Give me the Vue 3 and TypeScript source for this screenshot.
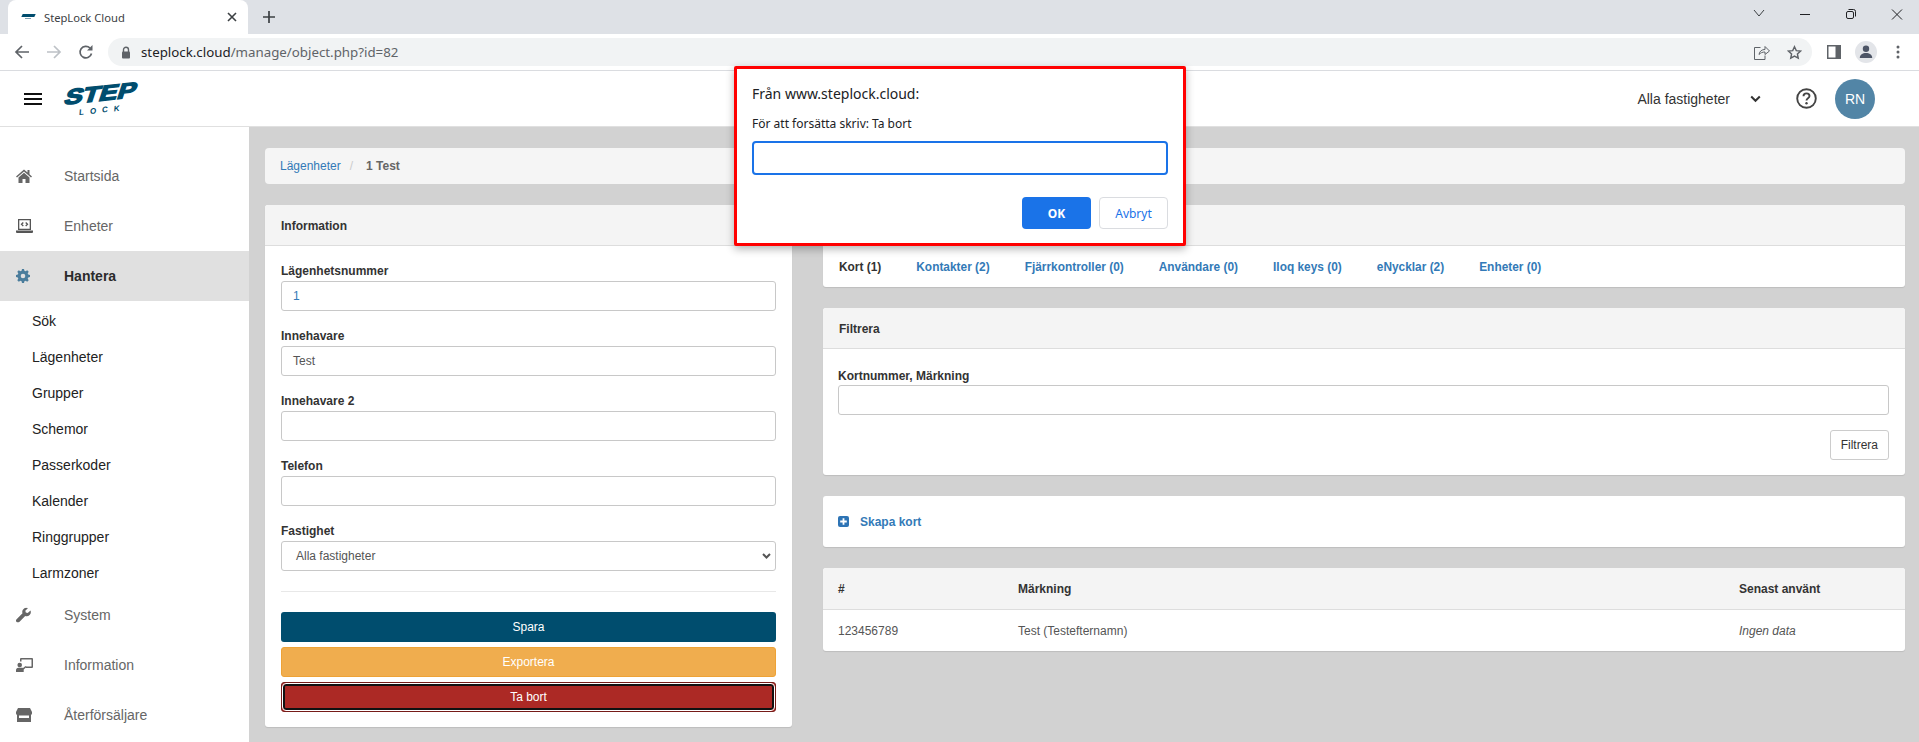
<script setup lang="ts">
const subItems = ['Sök', 'Lägenheter', 'Grupper', 'Schemor', 'Passerkoder', 'Kalender', 'Ringgrupper', 'Larmzoner']
const tabs = [
  { label: 'Kort (1)', active: true },
  { label: 'Kontakter (2)', active: false },
  { label: 'Fjärrkontroller (0)', active: false },
  { label: 'Användare (0)', active: false },
  { label: 'Iloq keys (0)', active: false },
  { label: 'eNycklar (2)', active: false },
  { label: 'Enheter (0)', active: false },
]
const fields = [
  { label: 'Lägenhetsnummer', value: '1' },
  { label: 'Innehavare', value: 'Test' },
  { label: 'Innehavare 2', value: '' },
  { label: 'Telefon', value: '' },
]
</script>

<template>
  <div class="window">
    <div class="tabstrip">
      <div class="tab">
        <span class="fav">
          <span class="fav-a"></span>
          <span class="fav-b"></span>
        </span>
        <span class="tab-title">StepLock Cloud</span>
        <svg class="tab-x" width="10" height="10" viewBox="0 0 10 10"><path d="M1 1l8 8M9 1l-8 8" stroke="#3c4043" stroke-width="1.6" /></svg>
      </div>
      <svg class="plus" width="14" height="14" viewBox="0 0 14 14"><path d="M7 1v12M1 7h12" stroke="#3c4043" stroke-width="1.7" /></svg>
      <div class="win-ctrls">
        <svg width="46" height="28" viewBox="0 0 46 28"><path d="M18 10l5 6 5-6" fill="none" stroke="#3c4043" /></svg>
        <svg width="46" height="28" viewBox="0 0 46 28"><path d="M18 14.500h10" stroke="#202124" /></svg>
        <svg width="46" height="28" viewBox="0 0 46 28"><rect x="18.500" y="11.500" width="7" height="7" rx="1.500" fill="none" stroke="#202124" /><path d="M20.500 9.500h5a2 2 0 0 1 2 2v5" fill="none" stroke="#202124" /></svg>
        <svg width="46" height="28" viewBox="0 0 46 28"><path d="M18 9.500l10 10M28 9.500l-10 10" stroke="#202124" /></svg>
      </div>
    </div>

    <div class="toolbar">
      <svg class="nav-ic" width="16" height="16" viewBox="0 0 16 16"><path d="M15 8H2M8 2L2 8l6 6" fill="none" stroke="#5f6368" stroke-width="1.700" /></svg>
      <svg class="nav-ic" width="16" height="16" viewBox="0 0 16 16"><path d="M1 8h13M8 2l6 6-6 6" fill="none" stroke="#bdc1c6" stroke-width="1.700" /></svg>
      <svg class="nav-ic" width="16" height="16" viewBox="0 0 16 16"><path d="M13.500 9.500A5.800 5.800 0 1 1 12 4" fill="none" stroke="#5f6368" stroke-width="1.700" /><path d="M14.500 1v5.500H9z" fill="#5f6368" /></svg>
      <div class="omnibox">
        <svg width="10" height="13" viewBox="0 0 10 13"><path d="M2.500 6V3.800a2.500 2.500 0 0 1 5 0V6" fill="none" stroke="#5f6368" stroke-width="1.400" /><rect x="1" y="5.500" width="8" height="7" rx="1" fill="#5f6368" /></svg>
        <span class="url"><span class="url-host">steplock.cloud</span>/manage/object.php?id=82</span>
        <svg class="share" width="16" height="15" viewBox="0 0 16 15"><path d="M6.500 2.500H.5v12h10.500v-4M5 9.500c.5-3.500 3-5 6-5V1.500l4.500 4.500L11 9.500V7c-2.500 0-4.500.8-6 2.500z" fill="none" stroke="#5f6368" /></svg>
        <svg class="star" width="15" height="15" viewBox="0 0 16 16"><path d="M8 1.800l1.900 4.200 4.600.5-3.400 3.100.9 4.500L8 11.800l-4 2.300.9-4.500L1.500 6.500 6.100 6z" fill="none" stroke="#5f6368" stroke-width="1.500" /></svg>
      </div>
      <svg class="panel" width="14" height="14" viewBox="0 0 14 14"><rect width="14" height="14" fill="#5f6368" /><rect x="1.500" y="1.500" width="7" height="11" fill="#fff" /></svg>
      <div class="profile">
        <svg width="14" height="14" viewBox="0 0 14 14"><circle cx="7" cy="3.800" r="3.200" fill="#4d5566" /><path d="M0.800 13c0-3.300 2.800-5 6.200-5s6.200 1.700 6.200 5z" fill="#4d5566" /></svg>
      </div>
      <svg class="dots" width="4" height="14" viewBox="0 0 4 14"><circle cx="2" cy="2" r="1.500" fill="#5f6368" /><circle cx="2" cy="7" r="1.500" fill="#5f6368" /><circle cx="2" cy="12" r="1.500" fill="#5f6368" /></svg>
    </div>

    <header class="topbar">
      <button class="burger" aria-label="Meny"><span></span><span></span><span></span></button>
      <div class="logo">
        <span class="logo-step">STEP</span>
        <span class="logo-lock">LOCK</span>
      </div>
      <div class="top-right">
        <span class="prop">Alla fastigheter</span>
        <svg class="prop-chev" width="11" height="8" viewBox="0 0 11 8"><path d="M1.200 1.500l4.300 4.300 4.300-4.300" fill="none" stroke="#333" stroke-width="2" /></svg>
        <svg class="help" width="21" height="21" viewBox="0 0 21 21"><circle cx="10.500" cy="10.500" r="9.300" fill="none" stroke="#444" stroke-width="1.900" /><path d="M7.500 8.200c0-1.800 1.300-2.800 3-2.800s3 1 3 2.600c0 2.300-3 2.200-3 4.500" fill="none" stroke="#444" stroke-width="1.900" /><circle cx="10.500" cy="15.300" r="1.200" fill="#444" /></svg>
        <span class="avatar">RN</span>
      </div>
    </header>

    <div class="body">
      <aside class="sidebar">
        <a class="nav-row">
          <svg class="nav-icon" width="16" height="14" viewBox="0 0 16 14"><path d="M8 .5L0 7.500l1 1.100L8 2.500l7 6.100 1-1.100-2.500-2.200V1h-2v2.500z" fill="#666" /><path d="M8 3.800L2.500 8.500V14H6.500V10h3v4h4V8.500z" fill="#666" /></svg>
          <span>Startsida</span>
        </a>
        <a class="nav-row">
          <svg class="nav-icon" width="17" height="14" viewBox="0 0 17 14"><path d="M2 0h13v11H2zM3.300 1.300v8.400h10.400V1.300z" fill="#555" fill-rule="evenodd" /><path d="M0 11.500h17V13a1 1 0 0 1-1 1H1a1 1 0 0 1-1-1z" fill="#555" /><path d="M7.300 3.500L5.500 5.300l1.800 1.700M9.700 3.500l1.800 1.800-1.800 1.700" fill="none" stroke="#555" stroke-width="1.300" /></svg>
          <span>Enheter</span>
        </a>
        <a class="nav-row current">
          <svg class="nav-icon" width="14" height="14" viewBox="0 0 14 14"><path d="M6 0h2l.4 1.800 1.200.5L11.200 1.300l1.500 1.500-1 1.600.5 1.200 1.800.4v2l-1.800.4-.5 1.200 1 1.600-1.500 1.500-1.600-1-1.200.5L8 14H6l-.4-1.800-1.200-.5-1.600 1-1.500-1.500 1-1.600-.5-1.200L0 8V6l1.800-.4.5-1.200-1-1.600 1.500-1.500 1.600 1 1.200-.5z" fill="#4b7d9c" /><circle cx="7" cy="7" r="2.300" fill="#e0e0e0" /></svg>
          <span>Hantera</span>
        </a>
        <ul class="subnav">
          <li v-for="s in subItems" :key="s">{{ s }}</li>
        </ul>
        <a class="nav-row">
          <svg class="nav-icon" width="15" height="15" viewBox="0 0 15 15"><path d="M14.500 3l-2.800 2.500-1.900-.4-.5-1.900L12 .5A4.200 4.200 0 0 0 6.500 5.800L.6 11.700a1.900 1.900 0 0 0 2.700 2.700l5.900-5.900A4.200 4.200 0 0 0 14.500 3z" fill="#666" /></svg>
          <span>System</span>
        </a>
        <a class="nav-row">
          <svg class="nav-icon" width="17" height="14" viewBox="0 0 17 14"><path d="M4 1a1 1 0 0 1 1-1h11a1 1 0 0 1 1 1v8a1 1 0 0 1-1 1h-6V8.500h5.500V1.500H5.500v2H4z" fill="#666" /><circle cx="3.700" cy="7" r="2.300" fill="#666" /><path d="M0 14v-2c0-1.300 1-2.300 2.300-2.300h2.800c.8 0 1.500 0 2 .2L9.500 8l1 1-2.800 2.500V14z" fill="#666" /></svg>
          <span>Information</span>
        </a>
        <a class="nav-row">
          <svg class="nav-icon" width="16" height="14" viewBox="0 0 16 14"><path d="M2 0h12l2 4v1.500a1.500 1.500 0 0 1-1 1.400V14H1V6.900A1.500 1.500 0 0 1 0 5.500V4z" fill="#666" /><rect x="3" y="7.500" width="10" height="2.500" fill="#fff" /></svg>
          <span>Återförsäljare</span>
        </a>
      </aside>

      <main class="content">
        <nav class="crumbs">
          <a>Lägenheter</a>
          <span class="sep">/</span>
          <b>1 Test</b>
        </nav>

        <div class="columns">
          <section class="card left">
            <h3 class="card-head">Information</h3>
            <div class="form">
              <div v-for="f in fields" :key="f.label" class="group">
                <label>{{ f.label }}</label>
                <div class="input" :class="{ blue: f.label === 'Lägenhetsnummer' }">{{ f.value }}</div>
              </div>
              <div class="group">
                <label>Fastighet</label>
                <div class="input select">
                  <span>Alla fastigheter</span>
                  <svg width="9" height="6" viewBox="0 0 9 6"><path d="M1 1l3.500 3.500L8 1" fill="none" stroke="#555" stroke-width="2" /></svg>
                </div>
              </div>
              <hr />
              <div class="btn primary">Spara</div>
              <div class="btn warn">Exportera</div>
              <div class="btn danger"><span>Ta bort</span></div>
            </div>
          </section>

          <div class="right">
            <section class="card">
              <h3 class="card-head">&nbsp;</h3>
              <div class="tabs">
                <a v-for="t in tabs" :key="t.label" :class="{ on: t.active }">{{ t.label }}</a>
              </div>
            </section>

            <section class="card filter">
              <h3 class="card-head">Filtrera</h3>
              <div class="filter-body">
                <label>Kortnummer, Märkning</label>
                <div class="input"></div>
                <div class="filter-foot"><div class="btn-plain">Filtrera</div></div>
              </div>
            </section>

            <section class="card create">
              <svg width="11" height="11" viewBox="0 0 11 11"><rect width="11" height="11" rx="2" fill="#2e74b5" /><path d="M5.500 2.200v6.600M2.200 5.500h6.600" stroke="#fff" stroke-width="1.800" /></svg>
              <a>Skapa kort</a>
            </section>

            <section class="card table">
              <div class="t-row t-head">
                <span>#</span><span>Märkning</span><span>Senast använt</span>
              </div>
              <div class="t-row">
                <span>123456789</span><span>Test (Testefternamn)</span><i>Ingen data</i>
              </div>
            </section>
          </div>
        </div>
      </main>
    </div>

    <div class="dialog">
      <p class="d-title">Från www.steplock.cloud:</p>
      <p class="d-msg">För att forsätta skriv: Ta bort</p>
      <div class="d-input"></div>
      <div class="d-actions">
        <div class="d-ok">OK</div>
        <div class="d-cancel">Avbryt</div>
      </div>
    </div>
  </div>
</template>

<style>
html, body { margin: 0; padding: 0; overflow: hidden; background: #d2d2d2; }
</style>

<style scoped>
.window {
  position: relative;
  width: 1919px;
  height: 742px;
  overflow: hidden;
  display: flex;
  flex-direction: column;
  font-family: "Liberation Sans", Arial, sans-serif;
  font-size: 12px;
  color: #333;
  background: #d2d2d2;
}
.tabstrip {
  height: 34px;
  flex: none;
  background: #dee1e6;
  display: flex;
  align-items: flex-start;
  padding-left: 8px;
}
.tab {
  width: 240px;
  height: 34px;
  box-sizing: border-box;
  background: #fff;
  border-radius: 8px 8px 0 0;
  display: flex;
  align-items: center;
  padding: 0 11px 0 14px;
  font-family: "Noto Sans", "Open Sans", sans-serif;
  font-size: 11.200px;
  color: #3c4043;
}
.fav { width: 13px; height: 7px; margin-right: 9px; display: flex; flex-direction: column; gap: 1px; flex: none; }
.fav-a { height: 3px; background: #004d6e; transform: skewX(-25deg); }
.fav-b { height: 1px; width: 6px; margin-left: 3px; background: #7f9fb0; }
.tab-title { flex: 1; }
.tab-x { flex: none; }
.plus { margin: 10px 0 0 14px; flex: none; }
.win-ctrls { margin-left: auto; margin-right: -1px; display: flex; }
.win-ctrls svg { display: block; }
.toolbar {
  height: 37px;
  flex: none;
  box-sizing: border-box;
  background: #fff;
  border-bottom: 1px solid #dadce0;
  display: flex;
  align-items: center;
  padding: 0 14px;
}
.nav-ic { flex: none; margin-right: 16px; }
.omnibox {
  flex: none;
  width: 1704px;
  margin-left: -2px;
  height: 28px;
  box-sizing: border-box;
  background: #f1f3f4;
  border-radius: 14px;
  display: flex;
  align-items: center;
  padding: 0 10px 0 13px;
}
.url {
  margin-left: 10px;
  font-family: "Noto Sans", "Open Sans", sans-serif;
  font-size: 13.300px;
  color: #5f6368;
  flex: 1;
}
.url-host { color: #202124; }
.share { margin-right: 17px; }
.panel { margin-left: 15px; flex: none; }
.profile {
  margin-left: 14px;
  width: 22px;
  height: 22px;
  flex: none;
  border-radius: 50%;
  background: #e3e5e9;
  display: flex;
  align-items: center;
  justify-content: center;
}
.dots { margin-left: 19px; flex: none; }
.topbar {
  height: 56px;
  flex: none;
  box-sizing: border-box;
  background: #fff;
  border-bottom: 1px solid #e0e0e0;
  display: flex;
  align-items: center;
  padding: 0 44px 0 24px;
}
.burger { border: 0; background: none; padding: 0; width: 18px; display: flex; flex-direction: column; gap: 3px; }
.burger span { display: block; height: 2px; background: #111; }
.logo { margin-left: 19px; width: 74px; height: 34px; display: flex; flex-direction: column; transform: translateY(2px) rotate(-6deg); color: #004d6e; align-items: flex-start; }
.logo-step {
  font-family: "Liberation Sans", sans-serif;
  font-size: 21px;
  font-weight: 700;
  line-height: 20px;
  letter-spacing: 0;
  transform: skewX(-24deg) scaleX(1.300);
  transform-origin: left center;
  margin-left: 5px;
  -webkit-text-stroke: 1.400px #004d6e;
}
.logo-lock {
  font-size: 8px;
  font-weight: 700;
  font-style: italic;
  letter-spacing: 6px;
  line-height: 10px;
  margin: 2px 0 0 17px;
}
.top-right { margin-left: auto; display: flex; align-items: center; }
.prop { font-size: 14px; color: #333; }
.prop-chev { margin-left: 20px; }
.help { margin-left: 35px; }
.avatar {
  margin-left: 18px;
  width: 40px;
  height: 40px;
  border-radius: 50%;
  background: #5285a6;
  color: #fff;
  font-size: 14px;
  display: flex;
  align-items: center;
  justify-content: center;
}
.body { flex: 1; display: flex; min-height: 0; }
.sidebar {
  width: 249px;
  flex: none;
  box-sizing: border-box;
  background: #fff;
  padding-top: 24px;
  font-size: 14px;
  color: #666;
}
.nav-row { height: 50px; display: flex; align-items: center; position: relative; padding-left: 64px; }
.nav-icon { position: absolute; left: 16px; top: 50%; transform: translateY(-50%); }
.current { background: #e0e0e0; color: #2b2b2b; font-weight: 700; }
.subnav { list-style: none; margin: 0; padding: 2px 0 0 32px; color: #222; height: 289px; box-sizing: border-box; }
.subnav li { height: 36px; line-height: 36px; }
.content { flex: 1; min-width: 0; padding: 21px 14px 0 16px; }
.crumbs {
  height: 36px;
  box-sizing: border-box;
  background: #f5f5f5;
  border-radius: 4px;
  display: flex;
  align-items: center;
  padding-left: 15px;
  color: #666;
}
.crumbs a { color: #337ab7; }
.sep { margin: 0 13px 0 9px; color: #ccc; }
.columns { display: grid; grid-template-columns: 527px 1fr; gap: 31px; margin-top: 21px; align-items: start; }
.card { background: #fff; border-radius: 3px; box-shadow: 0 1px 1px rgba(0, 0, 0, .1); }
.card-head {
  margin: 0;
  height: 41px;
  box-sizing: border-box;
  background: #f4f4f4;
  border-bottom: 1px solid #ddd;
  border-radius: 3px 3px 0 0;
  padding: 1px 16px 0;
  display: flex;
  align-items: center;
  font-size: 12px;
  font-weight: 700;
  color: #333;
}
.form { padding: 14px 16px 15px; }
.group { margin-bottom: 14px; }
.group:nth-child(5) { margin-bottom: 0; }
label { display: block; font-weight: 700; line-height: 23px; margin-bottom: -2px; color: #333; }
.input {
  height: 30px;
  box-sizing: border-box;
  border: 1px solid #c8c8c8;
  border-radius: 3px;
  background: #fff;
  padding: 0 11px;
  line-height: 28px;
  color: #555;
}
.input.blue { color: #337ab7; }
.select { display: flex; align-items: center; justify-content: space-between; padding: 0 4px 0 14px; }
hr { border: 0; border-top: 1px solid #e8e8e8; margin: 20px 0; }
.btn {
  height: 30px;
  margin-bottom: 5px;
  border-radius: 3px;
  color: #fff;
  text-align: center;
  line-height: 30px;
  box-sizing: border-box;
}
.btn:last-child { margin-bottom: 0; }
.primary { background: #004d6e; }
.warn { background: #f0ad4e; border: 1px solid #eea236; line-height: 28px; }
.danger { background: #ac2925; border: 1px solid #761c19; padding: 1px; line-height: 0; }
.danger span {
  display: block;
  height: 26px;
  line-height: 22px;
  box-sizing: border-box;
  border: 2px solid #111;
  border-radius: 3px;
  outline: 1px solid #fff;
}
.right { display: flex; flex-direction: column; gap: 21px; }
.tabs { height: 41px; display: flex; align-items: center; padding: 0 0 0 16px; font-weight: 700; font-size: 11.900px; }
.tabs a { margin-right: 35px; color: #337ab7; }
.tabs a.on { color: #333; }
.filter-body { padding: 16px 16px 15px 15px; }
.filter-body label { line-height: 22px; margin-bottom: -2px; }
.filter-foot { display: flex; justify-content: flex-end; margin-top: 15px; }
.btn-plain {
  height: 30px;
  box-sizing: border-box;
  border: 1px solid #ccc;
  border-radius: 3px;
  padding: 0 10px;
  line-height: 28px;
  color: #333;
}
.create { height: 51px; display: flex; align-items: center; padding-left: 15px; font-weight: 700; }
.create a { margin-left: 11px; color: #337ab7; }
.table { overflow: hidden; }
.t-row {
  display: grid;
  grid-template-columns: 180px 721px 1fr;
  height: 41px;
  align-items: center;
  padding-left: 15px;
  color: #555;
}
.t-head { background: #f4f4f4; border-bottom: 1px solid #ddd; font-weight: 700; color: #333; }
.dialog {
  position: absolute;
  left: 734px;
  top: 66px;
  width: 452px;
  height: 180px;
  box-sizing: border-box;
  border: 3px solid #f00;
  background: #fff;
  border-radius: 2px;
  box-shadow: 0 3px 8px rgba(0, 0, 0, .3);
  padding: 15px 15px 0;
  font-family: "Noto Sans", "Open Sans", sans-serif;
  color: #202124;
}
.d-title { margin: 0; font-size: 14px; line-height: 20px; }
.d-msg { margin: 12px 0 0; font-size: 12px; line-height: 16px; }
.d-input { margin-top: 9px; height: 34px; box-sizing: border-box; border: 2px solid #1a73e8; border-radius: 4px; }
.d-actions { display: flex; justify-content: flex-end; gap: 8px; margin-top: 22px; }
.d-ok, .d-cancel {
  width: 69px;
  height: 32px;
  box-sizing: border-box;
  border-radius: 4px;
  display: flex;
  align-items: center;
  justify-content: center;
  font-size: 12px;
}
.d-ok { background: #1a73e8; color: #fff; font-weight: 700; }
.d-cancel { border: 1px solid #dadce0; color: #1a73e8; }
</style>
